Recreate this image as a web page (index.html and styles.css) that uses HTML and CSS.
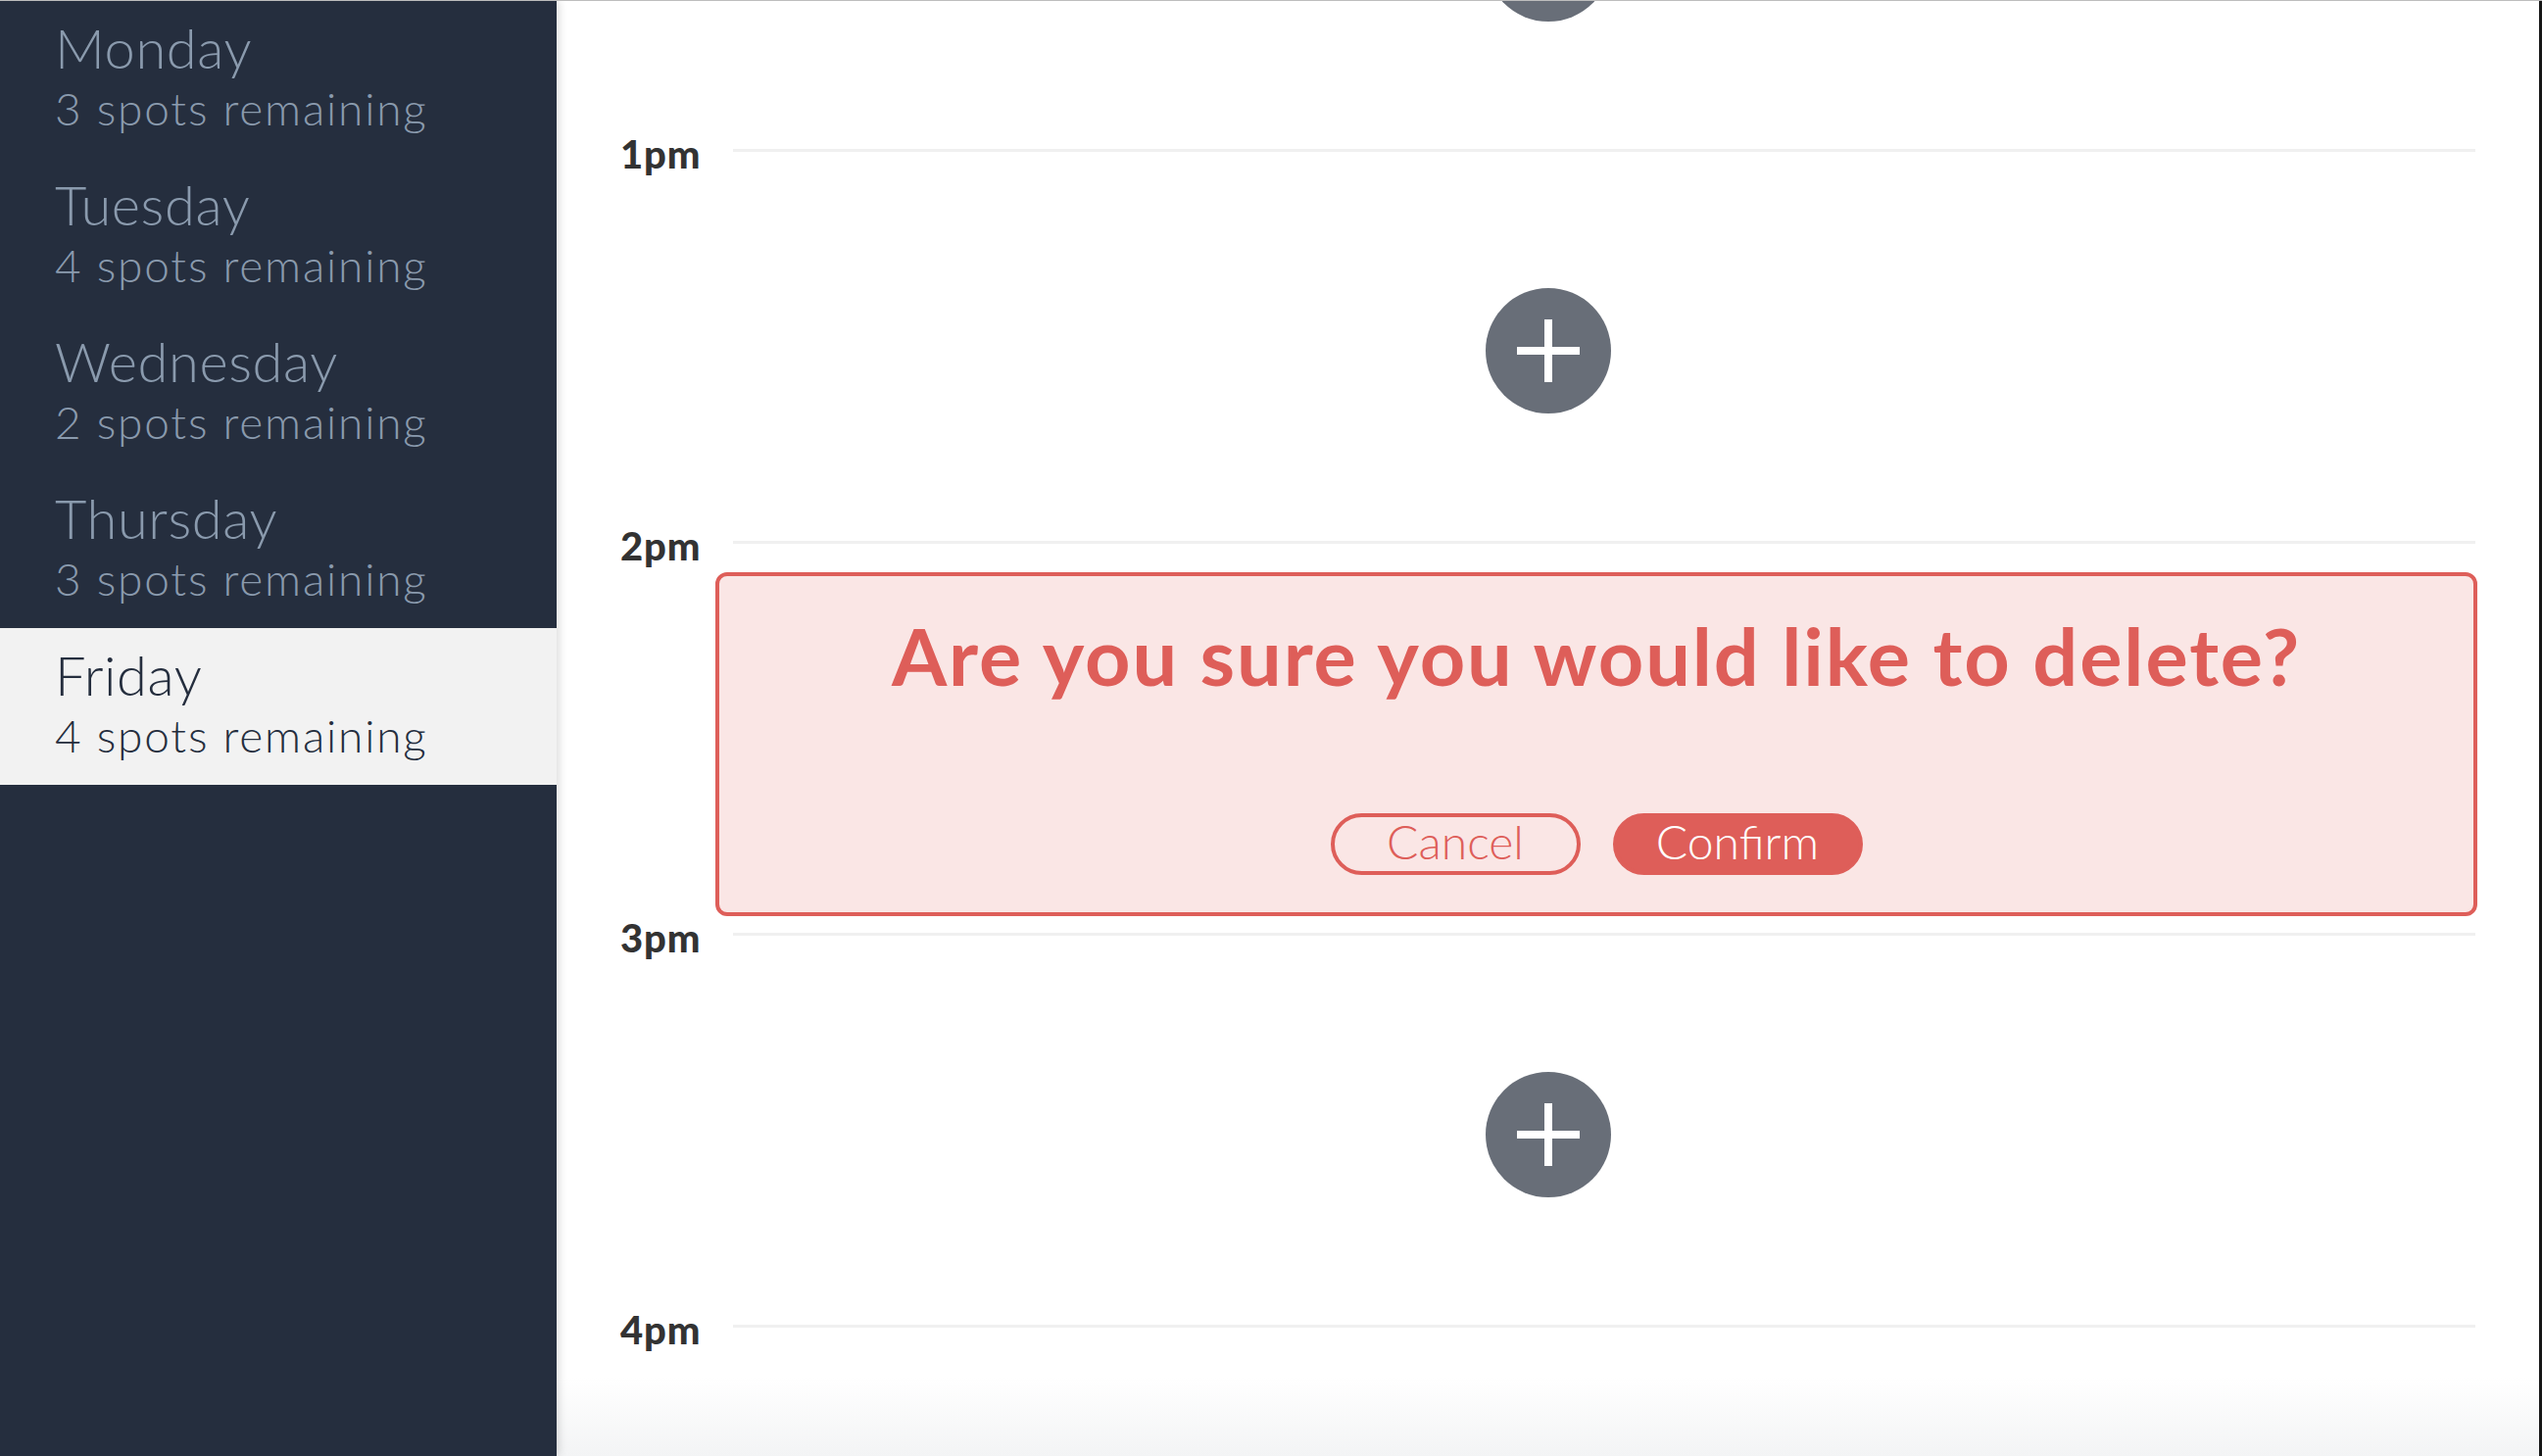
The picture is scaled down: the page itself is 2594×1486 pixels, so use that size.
FILE: index.html
```html
<!DOCTYPE html>
<html lang="en">
<head>
<meta charset="utf-8">
<title>Schedule</title>
<link rel="stylesheet" href="styles.css">
</head>
<body>
<div class="app">
  <aside class="sidebar">
    <div class="day"><div class="day-name">Monday</div><div class="day-spots">3 spots remaining</div></div>
    <div class="day"><div class="day-name">Tuesday</div><div class="day-spots">4 spots remaining</div></div>
    <div class="day"><div class="day-name">Wednesday</div><div class="day-spots">2 spots remaining</div></div>
    <div class="day"><div class="day-name">Thursday</div><div class="day-spots">3 spots remaining</div></div>
    <div class="day day-active"><div class="day-name">Friday</div><div class="day-spots">4 spots remaining</div></div>
  </aside>
  <main class="schedule">
    <div class="hours">
      <section class="hour">
        <div class="hour-head"><span class="hour-label"></span><span class="hour-line"></span></div>
        <div class="hour-body">
          <button class="add-btn" aria-label="Add"><svg class="plus" viewBox="0 0 64 64" width="64" height="64"><path d="M32 0V64M0 32H64" stroke="#fff" stroke-width="8" fill="none"/></svg></button>
        </div>
      </section>
      <section class="hour">
        <div class="hour-head"><span class="hour-label">1pm</span><span class="hour-line"></span></div>
        <div class="hour-body">
          <button class="add-btn" aria-label="Add"><svg class="plus" viewBox="0 0 64 64" width="64" height="64"><path d="M32 0V64M0 32H64" stroke="#fff" stroke-width="8" fill="none"/></svg></button>
        </div>
      </section>
      <section class="hour">
        <div class="hour-head"><span class="hour-label">2pm</span><span class="hour-line"></span></div>
        <div class="hour-body confirm-body">
          <div class="confirm">
            <h2 class="confirm-title">Are you sure you would like to delete?</h2>
            <div class="confirm-actions">
              <button class="btn btn-outline">Cancel</button>
              <button class="btn btn-fill">Confirm</button>
            </div>
          </div>
        </div>
      </section>
      <section class="hour">
        <div class="hour-head"><span class="hour-label">3pm</span><span class="hour-line"></span></div>
        <div class="hour-body">
          <button class="add-btn" aria-label="Add"><svg class="plus" viewBox="0 0 64 64" width="64" height="64"><path d="M32 0V64M0 32H64" stroke="#fff" stroke-width="8" fill="none"/></svg></button>
        </div>
      </section>
      <section class="hour">
        <div class="hour-head"><span class="hour-label">4pm</span><span class="hour-line"></span></div>
        <div class="hour-body">
          <button class="add-btn" aria-label="Add"><svg class="plus" viewBox="0 0 64 64" width="64" height="64"><path d="M32 0V64M0 32H64" stroke="#fff" stroke-width="8" fill="none"/></svg></button>
        </div>
      </section>
    </div>
  </main>
</div>
</body>
</html>
```

FILE: styles.css
```css
html, body {
  margin: 0;
  padding: 0;
  height: 100%;
}

body {
  font-family: Lato, "Liberation Sans", sans-serif;
  border-top: 1px solid #bdbdbd;
  box-sizing: border-box;
  overflow: hidden;
  background: #fff;
}

.app {
  display: flex;
  height: 1485px;
}

.sidebar {
  width: 568px;
  flex: none;
  background: #252e3e;
  box-shadow: 3px 0 8px rgba(0, 0, 0, 0.13);
  position: relative;
  z-index: 1;
}

.day {
  height: 160px;
  box-sizing: border-box;
  padding: 16px 0 0 56px;
  color: #8a9aad;
  font-weight: 300;
}

.day-name {
  font-size: 56px;
  line-height: 64px;
  letter-spacing: 0.6px;
}

.day-spots {
  font-size: 46px;
  line-height: 59px;
  letter-spacing: 1.8px;
}

.day-active {
  background: #f2f2f2;
  color: #252e3e;
}

.schedule {
  flex: 1;
  overflow: hidden;
  background: linear-gradient(to bottom, #fff calc(100% - 80px), #f3f4f5);
  border-right: 3px solid #161616;
}

.hours {
  margin-top: -249px;
}

.hour {
  height: 400px;
  display: flex;
  flex-direction: column;
}

.hour-head {
  display: flex;
  height: 20px;
  padding: 0 65px;
}

.hour-label {
  width: 115px;
  flex: none;
  font-weight: 900;
  font-size: 40px;
  line-height: 40px;
  letter-spacing: 0.8px;
  color: #333;
  margin-top: -15px;
}

.hour-line {
  flex: 1;
  border-top: 3px solid #f0f0f0;
}

.hour-body {
  flex: 1;
  display: flex;
  justify-content: center;
  align-items: flex-start;
  padding-top: 122px;
}

.add-btn {
  width: 128px;
  height: 128px;
  border-radius: 50%;
  background: #686e78;
  border: 0;
  padding: 0;
  display: flex;
  align-items: center;
  justify-content: center;
}

.confirm-body {
  display: block;
  padding: 12px 63px 0 162px;
}

.confirm {
  height: 351px;
  box-sizing: border-box;
  border: 4px solid #de5e59;
  border-radius: 12px;
  background: #fae6e5;
  padding: 33px 0 38px;
  display: flex;
  flex-direction: column;
  align-items: center;
  justify-content: space-between;
}

.confirm-title {
  margin: 0;
  font-size: 81px;
  line-height: 96px;
  font-weight: 700;
  letter-spacing: 1.9px;
  color: #de5e59;
}

.confirm-actions {
  display: flex;
  gap: 33px;
}

.btn {
  width: 255px;
  height: 63px;
  box-sizing: border-box;
  border: 4px solid #de5e59;
  border-radius: 32px;
  font-family: Lato, "Liberation Sans", sans-serif;
  font-weight: 300;
  font-size: 48px;
  line-height: 49px;
  padding: 0 0 6px;
}

.btn-outline {
  background: transparent;
  color: #de5e59;
}

.btn-fill {
  background: #de5e59;
  color: #fff;
}
```
